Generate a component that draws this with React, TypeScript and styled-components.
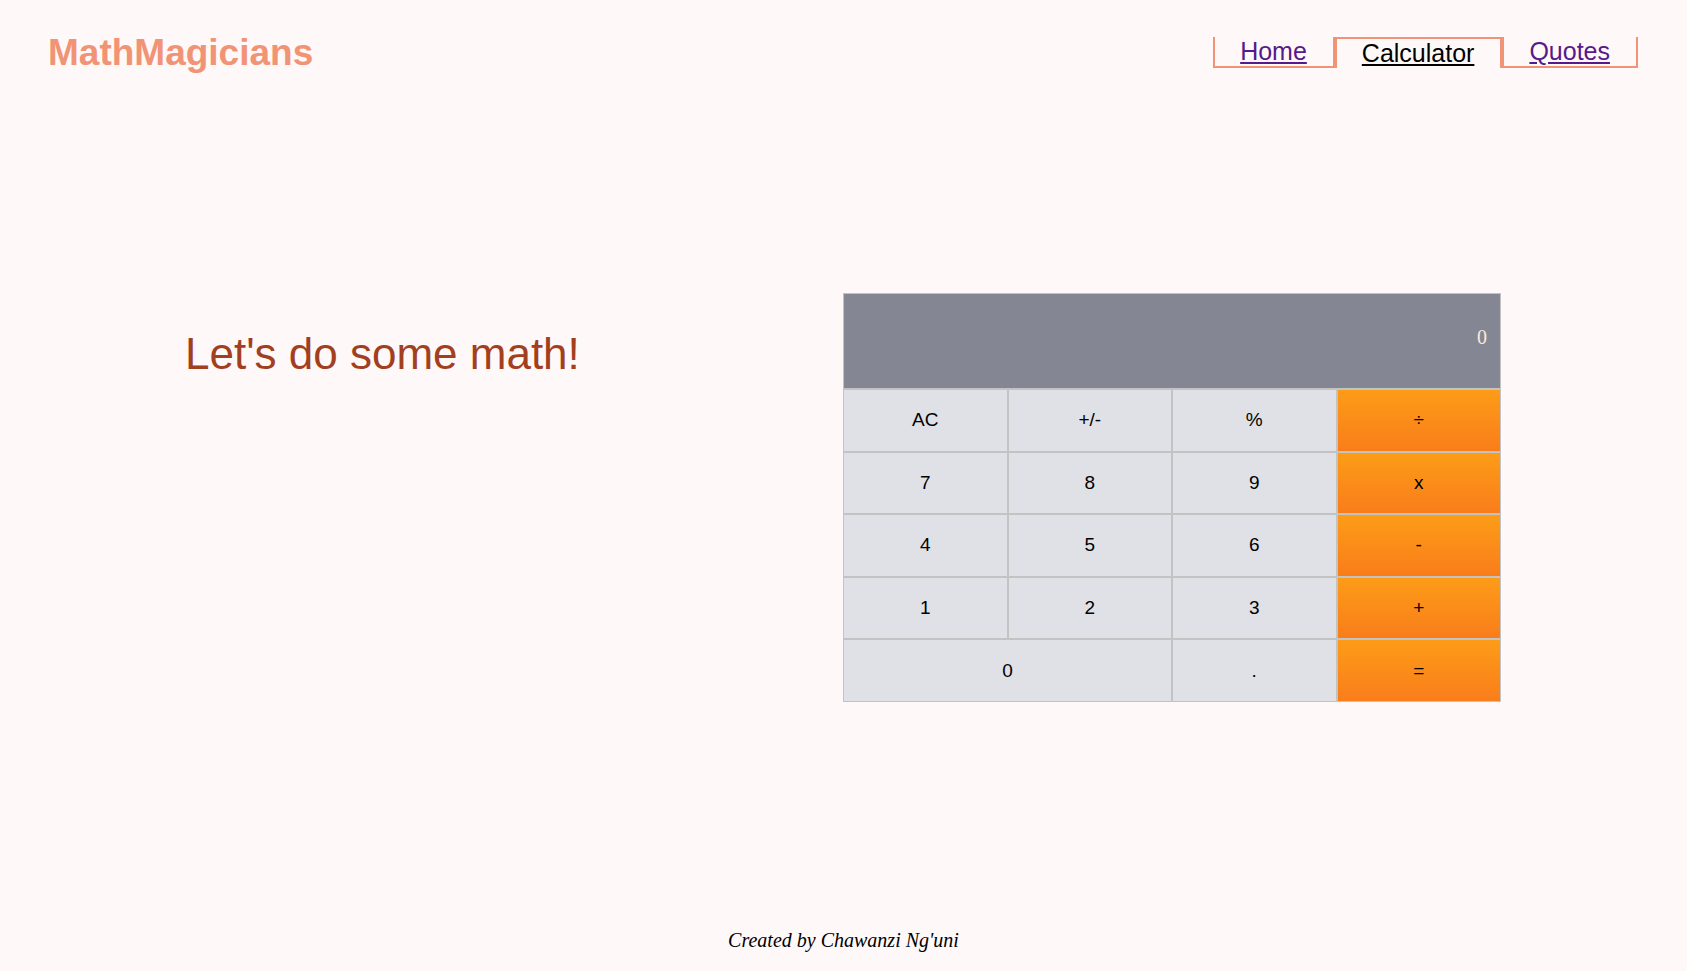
import React from 'react';
import styled, { createGlobalStyle } from 'styled-components';

const sans = '"Liberation Sans", Arial, sans-serif';
const serif = '"Liberation Serif", "Times New Roman", serif';

const GlobalStyle = createGlobalStyle`
  * {
    box-sizing: border-box;
  }

  body {
    margin: 0;
    background: #fff8f8;
    color: #000;
    font-family: ${serif};
    font-size: 20px;
  }
`;

const Page = styled.div`
  display: flex;
  flex-direction: column;
  min-height: 100vh;
`;

const Header = styled.header`
  display: flex;
  justify-content: space-between;
  align-items: center;
  padding: 30px 49px 0 48px;
`;

const Logo = styled.h1`
  margin: 0;
  color: #f19375;
  font: bold 37px/45px ${sans};
`;

const Nav = styled.nav`
  display: flex;
`;

const NavLink = styled.a<{ $active?: boolean }>`
  padding: 0 26px 0 25px;
  border: 2px solid #f19375;
  border-top-width: ${({ $active }) => ($active ? '2px' : '0')};
  border-bottom-width: ${({ $active }) => ($active ? '0' : '2px')};
  color: ${({ $active }) => ($active ? '#000' : '#551a8b')};
  font: 25px/29px ${sans};
`;

const Main = styled.main`
  flex: 1;
  display: grid;
  grid-template-columns: 1fr 1fr;
  align-items: start;
  padding: 218px 186px 0 185px;
`;

const Heading = styled.h2`
  margin: 0;
  padding-top: 36px;
  color: #a23f1f;
  font: 44px/50px ${sans};
`;

const Calculator = styled.section`
  display: grid;
  grid-template-columns: repeat(4, 1fr);
  grid-template-rows: 96px;
  grid-auto-rows: 1fr;
  min-height: 409px;
`;

const Display = styled.output`
  grid-column: 1 / -1;
  padding: 32px 13px;
  border: 1px solid #c4c3c3;
  background: #858693;
  color: #faebd7;
  line-height: 22px;
  text-align: right;
`;

const Key = styled.button<{ $operator?: boolean; $wide?: boolean }>`
  grid-column: span ${({ $wide }) => ($wide ? 2 : 1)};
  padding: 0;
  border: 1px solid #c4c3c3;
  border-radius: 0;
  background: ${({ $operator }) =>
    $operator ? 'linear-gradient(#fd9c17, #f97d1b)' : '#e0e1e6'};
  color: #000;
  font: 19px/22px ${sans};
  cursor: pointer;
`;

const Footer = styled.footer`
  padding-bottom: 20px;
  font-style: italic;
  line-height: 22px;
  text-align: center;
`;

const keys = [
  'AC', '+/-', '%', '÷',
  '7', '8', '9', 'x',
  '4', '5', '6', '-',
  '1', '2', '3', '+',
  '0', '.', '=',
];

const operators = ['÷', 'x', '-', '+', '='];

export default function App() {
  return (
    <Page>
      <GlobalStyle />
      <Header>
        <Logo>MathMagicians</Logo>
        <Nav>
          <NavLink href="#home">Home</NavLink>
          <NavLink href="#calculator" $active aria-current="page">
            Calculator
          </NavLink>
          <NavLink href="#quotes">Quotes</NavLink>
        </Nav>
      </Header>
      <Main>
        <Heading>Let's do some math!</Heading>
        <Calculator aria-label="Calculator">
          <Display>0</Display>
          {keys.map((key) => (
            <Key
              key={key}
              type="button"
              $operator={operators.includes(key)}
              $wide={key === '0'}
            >
              {key}
            </Key>
          ))}
        </Calculator>
      </Main>
      <Footer>Created by Chawanzi Ng'uni</Footer>
    </Page>
  );
}
